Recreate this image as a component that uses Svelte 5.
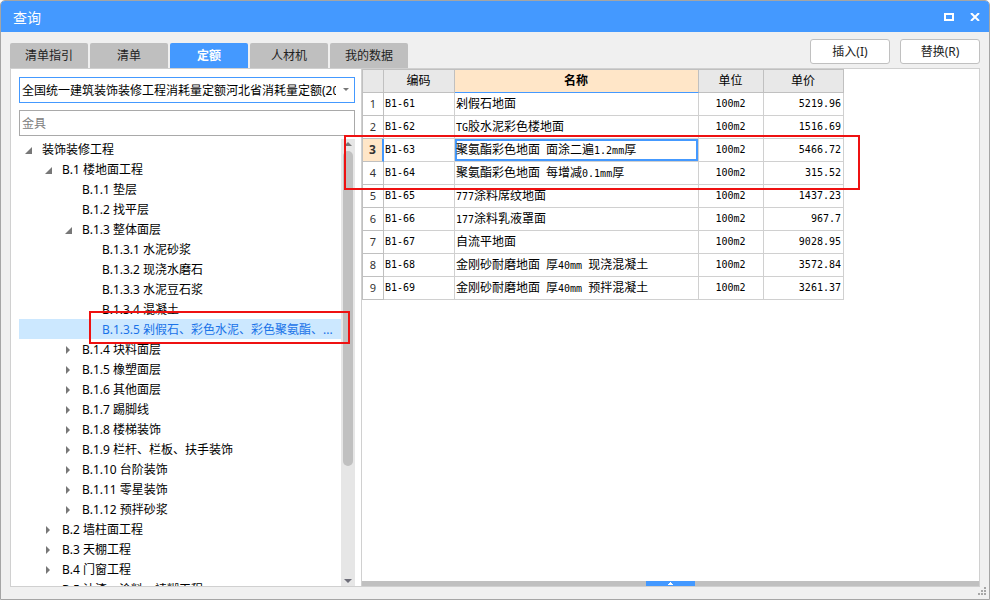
<script>
  const tabs = ['清单指引', '清单', '定额', '人材机', '我的数据'];
  let activeTab = $state('定额');
  let keyword = $state('');

  const tree = [
    { level: 0, text: '装饰装修工程', state: 'open' },
    { level: 1, text: 'B.1 楼地面工程', state: 'open' },
    { level: 2, text: 'B.1.1 垫层' },
    { level: 2, text: 'B.1.2 找平层' },
    { level: 2, text: 'B.1.3 整体面层', state: 'open' },
    { level: 3, text: 'B.1.3.1 水泥砂浆' },
    { level: 3, text: 'B.1.3.2 现浇水磨石' },
    { level: 3, text: 'B.1.3.3 水泥豆石浆' },
    { level: 3, text: 'B.1.3.4 混凝土' },
    { level: 3, text: 'B.1.3.5 剁假石、彩色水泥、彩色聚氨酯、...', selected: true },
    { level: 2, text: 'B.1.4 块料面层', state: 'closed' },
    { level: 2, text: 'B.1.5 橡塑面层', state: 'closed' },
    { level: 2, text: 'B.1.6 其他面层', state: 'closed' },
    { level: 2, text: 'B.1.7 踢脚线', state: 'closed' },
    { level: 2, text: 'B.1.8 楼梯装饰', state: 'closed' },
    { level: 2, text: 'B.1.9 栏杆、栏板、扶手装饰', state: 'closed' },
    { level: 2, text: 'B.1.10 台阶装饰', state: 'closed' },
    { level: 2, text: 'B.1.11 零星装饰', state: 'closed' },
    { level: 2, text: 'B.1.12 预拌砂浆', state: 'closed' },
    { level: 1, text: 'B.2 墙柱面工程', state: 'closed' },
    { level: 1, text: 'B.3 天棚工程', state: 'closed' },
    { level: 1, text: 'B.4 门窗工程', state: 'closed' },
    { level: 1, text: 'B.5 油漆、涂料、裱糊工程', state: 'closed' }
  ];

  const rows = [
    ['B1-61', '剁假石地面', '5219.96'],
    ['B1-62', 'TG胶水泥彩色楼地面', '1516.69'],
    ['B1-63', '聚氨酯彩色地面 面涂二遍1.2mm厚', '5466.72'],
    ['B1-64', '聚氨酯彩色地面 每增减0.1mm厚', '315.52'],
    ['B1-65', '777涂料席纹地面', '1437.23'],
    ['B1-66', '177涂料乳液罩面', '967.7'],
    ['B1-67', '自流平地面', '9028.95'],
    ['B1-68', '金刚砂耐磨地面 厚40mm 现浇混凝土', '3572.84'],
    ['B1-69', '金刚砂耐磨地面 厚40mm 预拌混凝土', '3261.37']
  ];
  const current = 2;

  // Splits a name into runs of Latin and Chinese text, so that Latin is set in half-width cells.
  const runs = (s) => s.match(/[\x20-\x7e]+|[^\x20-\x7e]+/g).map((t) => ({ t, latin: t.charCodeAt(0) < 128 }));
</script>

<div class="window">
  <header>
    <h1>查询</h1>
    <div class="controls">
      <button aria-label="最大化"><svg width="10" height="8" viewBox="0 0 10 8"><path d="M1 1H9V7H1Z" fill="none" stroke="#fff" stroke-width="2" /></svg></button>
      <button aria-label="关闭"><svg width="10" height="8" viewBox="0 0 10 8"><path d="M1 0L9 8M9 0L1 8" fill="none" stroke="#fff" stroke-width="2" /></svg></button>
    </div>
  </header>

  <div class="toolbar">
    <nav>
      {#each tabs as tab}
        <button class="tab" class:active={tab === activeTab} onclick={() => (activeTab = tab)}>{tab}</button>
      {/each}
    </nav>
    <div class="actions">
      <button>插入(I)</button>
      <button>替换(R)</button>
    </div>
  </div>

  <main>
    <aside>
      <div class="combo">
        <select aria-label="定额库">
          <option>全国统一建筑装饰装修工程消耗量定额河北省消耗量定额(2012)</option>
        </select>
        <svg width="6" height="4" viewBox="0 0 6 4"><path d="M0 0H6L3 3Z" fill="#777" /></svg>
      </div>
      <input type="text" aria-label="搜索" placeholder="金具" bind:value={keyword} />
      <div class="browser">
        <ul role="tree">
          {#each tree as node}
            <li role="treeitem" aria-selected={!!node.selected} class="level{node.level}" class:selected={node.selected}>
              <span class="toggle">
                {#if node.state === 'open'}
                  <svg width="7" height="7" viewBox="0 0 7 7"><path d="M0 7L7 0V7Z" fill="#777" /></svg>
                {:else if node.state === 'closed'}
                  <svg width="7" height="8" viewBox="0 0 7 8"><path d="M1 0L5 4L1 8Z" fill="#777" /></svg>
                {/if}
              </span>
              <span class="label">{node.text}</span>
              {#if node.selected}<i class="mark mark-node"></i>{/if}
            </li>
          {/each}
        </ul>
        <div class="scroll">
          <svg width="8" height="4" viewBox="0 0 8 4"><path d="M0 4L4 0L8 4Z" fill="#777" /></svg>
          <div class="track"><div class="thumb"></div></div>
          <svg width="8" height="4" viewBox="0 0 8 4"><path d="M0 0H8L4 4Z" fill="#6d6d78" /></svg>
        </div>
      </div>
    </aside>

    <section>
      <div class="grid">
        <table>
          <colgroup><col class="c-no" /><col class="c-code" /><col class="c-name" /><col class="c-unit" /><col class="c-price" /></colgroup>
          <thead>
            <tr><th></th><th>编码</th><th class="name">名称</th><th>单位</th><th>单价</th></tr>
          </thead>
          <tbody>
            {#each rows as [code, name, price], i}
              <tr class:current={i === current}>
                <th scope="row">{i + 1}</th>
                <td class="mono">{code}</td>
                <td class="title">{#each runs(name) as run}<span class:mono={run.latin}>{run.t}</span>{/each}</td>
                <td class="mono unit">100m2</td>
                <td class="mono price">{price}</td>
              </tr>
            {/each}
          </tbody>
        </table>
        <i class="mark mark-rows"></i>
      </div>
      <div class="splitter">
        <button aria-label="展开"><svg width="5" height="3" viewBox="0 0 5 3"><path d="M2 0H3V1H4V2H5V3H0V2H1V1H2Z" fill="#fff" /></svg></button>
      </div>
    </section>
  </main>

  <footer>
    <svg width="8" height="8" viewBox="0 0 8 8"><path d="M6 0h2v2h-2zM3 3h2v2h-2zM6 3h2v2h-2zM0 6h2v2h-2zM3 6h2v2h-2zM6 6h2v2h-2z" fill="#a6a6a6" /></svg>
  </footer>
</div>

<style>
  :global(body) { margin: 0; background: #fff; }
  * { box-sizing: border-box; }
  svg { display: block; }
  button, input, select { font: inherit; margin: 0; padding: 0; border: 0; }

  .window {
    display: flex;
    flex-direction: column;
    height: 100vh;
    border: 1px solid #a5a5a5;
    border-radius: 5px 5px 0 0;
    background: #f0f0f0;
    overflow: hidden;
    color: #000;
    font: 12px/20px "Noto Sans", "Noto Sans CJK SC", sans-serif;
  }

  header {
    display: flex;
    justify-content: space-between;
    align-items: center;
    height: 31px;
    flex: none;
    padding: 0 9px 0 12px;
    background: #4499ff;
    color: #fff;
  }
  h1 { margin: 0; padding-top: 2px; font-size: 14px; line-height: 20px; font-weight: 400; }
  .controls { display: flex; gap: 16px; }
  .controls button { background: none; }

  .toolbar {
    display: flex;
    justify-content: space-between;
    height: 36px;
    flex: none;
    padding: 0 9px;
  }
  nav { display: flex; gap: 2px; align-items: flex-end; }
  .tab {
    width: 78px;
    height: 25px;
    border-radius: 2px 2px 0 0;
    background: #bfbfbf;
    color: #222;
  }
  .tab.active { background: #4499ff; color: #fff; font-weight: 700; }
  .actions { display: flex; gap: 10px; padding-top: 7px; }
  .actions button {
    width: 80px;
    height: 25px;
    border: 1px solid #c0c0c0;
    border-radius: 3px;
    background: #fff;
    color: #222;
  }

  main {
    display: flex;
    flex: 1;
    min-height: 0;
    margin: 0 9px;
    border: 1px solid #d0d0d0;
    background: #fff;
  }
  aside {
    display: flex;
    flex-direction: column;
    width: 351px;
    flex: none;
    padding: 8px 6px 0 8px;
    border-right: 1px solid #d0d0d0;
  }
  .combo { position: relative; }
  .combo select {
    appearance: none;
    display: block;
    width: 100%;
    height: 26px;
    padding: 1px 18px 0 2px;
    border: 1px solid #4499ff;
    border-radius: 0;
    background: #fff;
    color: #000;
  }
  .combo svg { position: absolute; right: 6px; top: 11px; }
  input {
    width: 100%;
    height: 26px;
    margin: 7px 0 3px;
    padding: 0 2px;
    border: 1px solid #a9a9a9;
    background: #fff;
  }
  input::placeholder { color: #808080; opacity: 1; }

  .browser { display: flex; flex: 1; min-height: 0; overflow: hidden; }
  ul { flex: 1; min-width: 0; margin: 0; padding: 0; list-style: none; }
  li { position: relative; display: flex; align-items: center; height: 20px; padding-top: 2px; white-space: nowrap; }
  .level0 { padding-left: 6px; }
  .level1 { padding-left: 26px; }
  .level2 { padding-left: 46px; }
  .level3 { padding-left: 66px; }
  .toggle { width: 17px; flex: none; }
  .selected { background: #cce8ff; color: #1a73e8; }

  .scroll {
    display: flex;
    flex-direction: column;
    align-items: center;
    width: 14px;
    padding: 3px 0;
    background: #e6e6e6;
  }
  .track { flex: 1; width: 10px; padding: 5px 0 8px; }
  .thumb { height: 75%; border-radius: 5px; background: #c0c0c0; }

  section { display: flex; flex-direction: column; flex: 1; min-width: 0; }
  .grid { position: relative; flex: 1; min-height: 0; }
  table { width: 482px; table-layout: fixed; border-collapse: separate; border-spacing: 0; }
  .c-no { width: 22px; }
  .c-code { width: 71px; }
  .c-name { width: 244px; }
  .c-unit { width: 65px; }
  .c-price { width: 80px; }
  th, td {
    height: 23px;
    padding: 0 2px 0 1px;
    border: 0 solid #d0d0d0;
    border-width: 0 1px 1px 0;
    line-height: 20px;
    font-weight: 400;
    white-space: nowrap;
    overflow: hidden;
  }
  thead th { height: 24px; border-color: #c0c0c0; border-top-width: 1px; background: #e8e8e8; }
  thead .name { background: #ffe6c8; border-bottom-color: #4499ff; font-weight: 700; }
  th:first-child { border-left-width: 1px; border-color: #c0c0c0; }
  tbody th { padding: 0; font-size: 11px; color: #333; }
  .mono { font-family: "DejaVu Sans Mono", monospace; font-size: 10px; }
  .title span { white-space: pre; }
  .unit { text-align: center; }
  .price { text-align: right; }
  .current th { background: #ffe6c8; border-right: 2px solid #4499ff; font-size: 12px; font-weight: 700; }
  .current .title { box-shadow: inset 0 0 0 2px #4499ff; }

  .mark { position: absolute; z-index: 2; border: 2px solid #ee1111; pointer-events: none; }
  .mark-node { left: 70px; top: -8px; width: 261px; height: 33px; }
  .mark-rows { left: -18px; top: 66px; width: 516px; height: 55px; }

  .splitter { display: flex; justify-content: center; height: 5px; flex: none; background: #c0c0c0; }
  .splitter button { display: flex; align-items: center; justify-content: center; width: 49px; background: #4499ff; }

  footer { display: flex; justify-content: flex-end; align-items: flex-start; height: 12px; flex: none; padding: 0 3px; }
</style>
